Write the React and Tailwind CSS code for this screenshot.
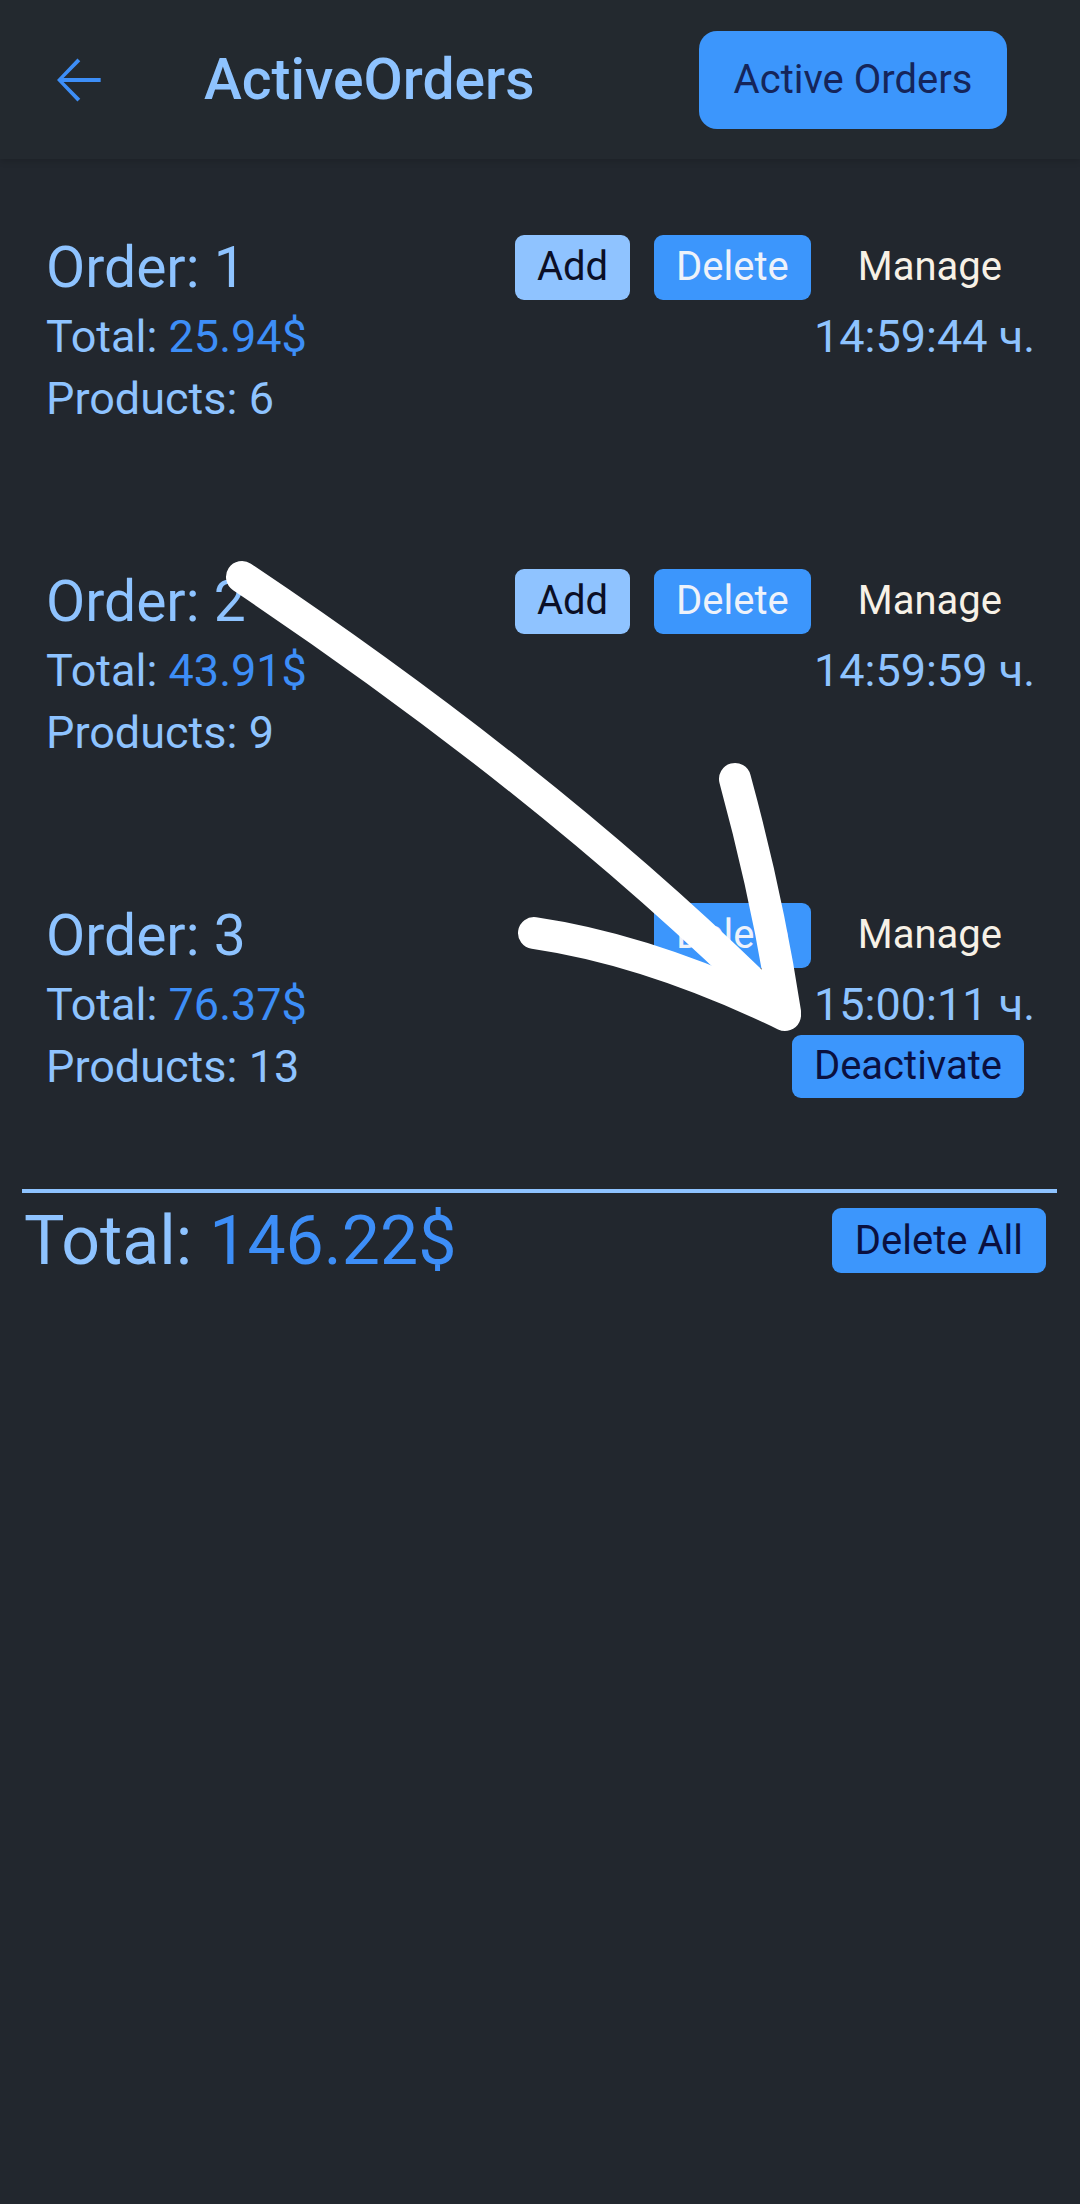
const orders = [
  { id: 1, total: "25.94$", products: 6, time: "14:59:44 ч.", canAdd: true, active: false },
  { id: 2, total: "43.91$", products: 9, time: "14:59:59 ч.", canAdd: true, active: false },
  { id: 3, total: "76.37$", products: 13, time: "15:00:11 ч.", canAdd: false, active: true },
];

function BackArrow() {
  return (
    <svg width="68" height="68" viewBox="0 0 24 24" fill="#3d8ef7">
      <path d="M20 11.3H6.9l5.9-5.9-1-1L4.6 12l7.2 7.6 1-1-5.9-5.9H20v-1.4z" />
    </svg>
  );
}

function OrderCard({ order }) {
  return (
    <div className="flex flex-col">
      {/* title + actions */}
      <div className="h-[70px] flex items-center justify-between">
        <div className="text-[57px] text-[#8ec3ff] leading-none">Order: {order.id}</div>
        <div className="flex items-center gap-[24px] mr-[10px]">
          {order.canAdd && (
            <button className="h-[65px] px-[22px] rounded-[9px] bg-[#8fc3ff] text-[40px] text-[#0b0f26] leading-none">
              Add
            </button>
          )}
          <button className="h-[65px] px-[22px] rounded-[9px] bg-[#3c96fc] text-[40px] text-[#eef2fa] leading-none">
            Delete
          </button>
          <button className="h-[65px] px-[23px] text-[40px] text-[#f7f1e6] leading-none">Manage</button>
        </div>
      </div>
      {/* total + time */}
      <div className="h-[68px] flex items-center justify-between text-[45px] leading-none">
        <div className="text-[#8ec3ff]">
          Total: <span className="text-[#3d8ef7]">{order.total}</span>
        </div>
        <div className="text-[#8ec3ff]">{order.time}</div>
      </div>
      {/* products + deactivate */}
      <div className="h-[56px] flex items-center justify-between">
        <div className="text-[45px] text-[#8ec3ff] leading-none">Products: {order.products}</div>
        {order.active && (
          <button className="h-[63px] px-[22px] mr-[11px] rounded-[9px] bg-[#3c96fc] text-[40px] text-[#0a1040] leading-none">
            Deactivate
          </button>
        )}
      </div>
    </div>
  );
}

export default function App() {
  return (
    <div className="relative min-h-screen bg-[#22272e] font-[Roboto,sans-serif]">
      {/* Top bar */}
      <div className="h-[159px] flex items-center bg-[#23292f] shadow-[0_3px_6px_rgba(0,0,0,0.12)] relative z-10">
        <div className="w-[68px] ml-[44px] flex items-center justify-center">
          <BackArrow />
        </div>
        <div className="ml-[92px] text-[57px] font-medium text-[#8ec3ff] leading-none">ActiveOrders</div>
        <button className="ml-auto mr-[73px] h-[98px] w-[308px] rounded-[18px] bg-[#3c96fc] text-[40px] text-[#15255a] leading-none">
          Active Orders
        </button>
      </div>

      {/* Orders */}
      <div className="pt-[73px] pl-[46px] pr-[45px] flex flex-col gap-[140px]">
        {orders.map(o => (
          <OrderCard key={o.id} order={o} />
        ))}
      </div>

      {/* Summary */}
      <div className="mt-[95px] ml-[22px] mr-[23px] h-[4px] bg-[#8ec3ff]" />
      <div className="mt-[15px] pl-[24px] pr-[34px] h-[65px] flex items-center justify-between">
        <div className="text-[68px] text-[#8ec3ff] leading-none">
          Total: <span className="text-[#3d8ef7]">146.22$</span>
        </div>
        <button className="h-[65px] px-[23px] rounded-[9px] bg-[#3c96fc] text-[40px] text-[#0a1040] leading-none">
          Delete All
        </button>
      </div>

      {/* Hand-drawn annotation arrow */}
      <svg
        className="absolute inset-0 pointer-events-none z-20"
        width="1080"
        height="2204"
        viewBox="0 0 1080 2204"
        fill="none"
        stroke="#ffffff"
        strokeLinecap="round"
        strokeLinejoin="round"
      >
        <path d="M242 577 Q560 790 782 1012" strokeWidth="32" />
        <path d="M735 779 Q768 900 785 1012" strokeWidth="32" />
        <path d="M534 933 Q650 950 785 1015" strokeWidth="32" />
      </svg>
    </div>
  );
}
